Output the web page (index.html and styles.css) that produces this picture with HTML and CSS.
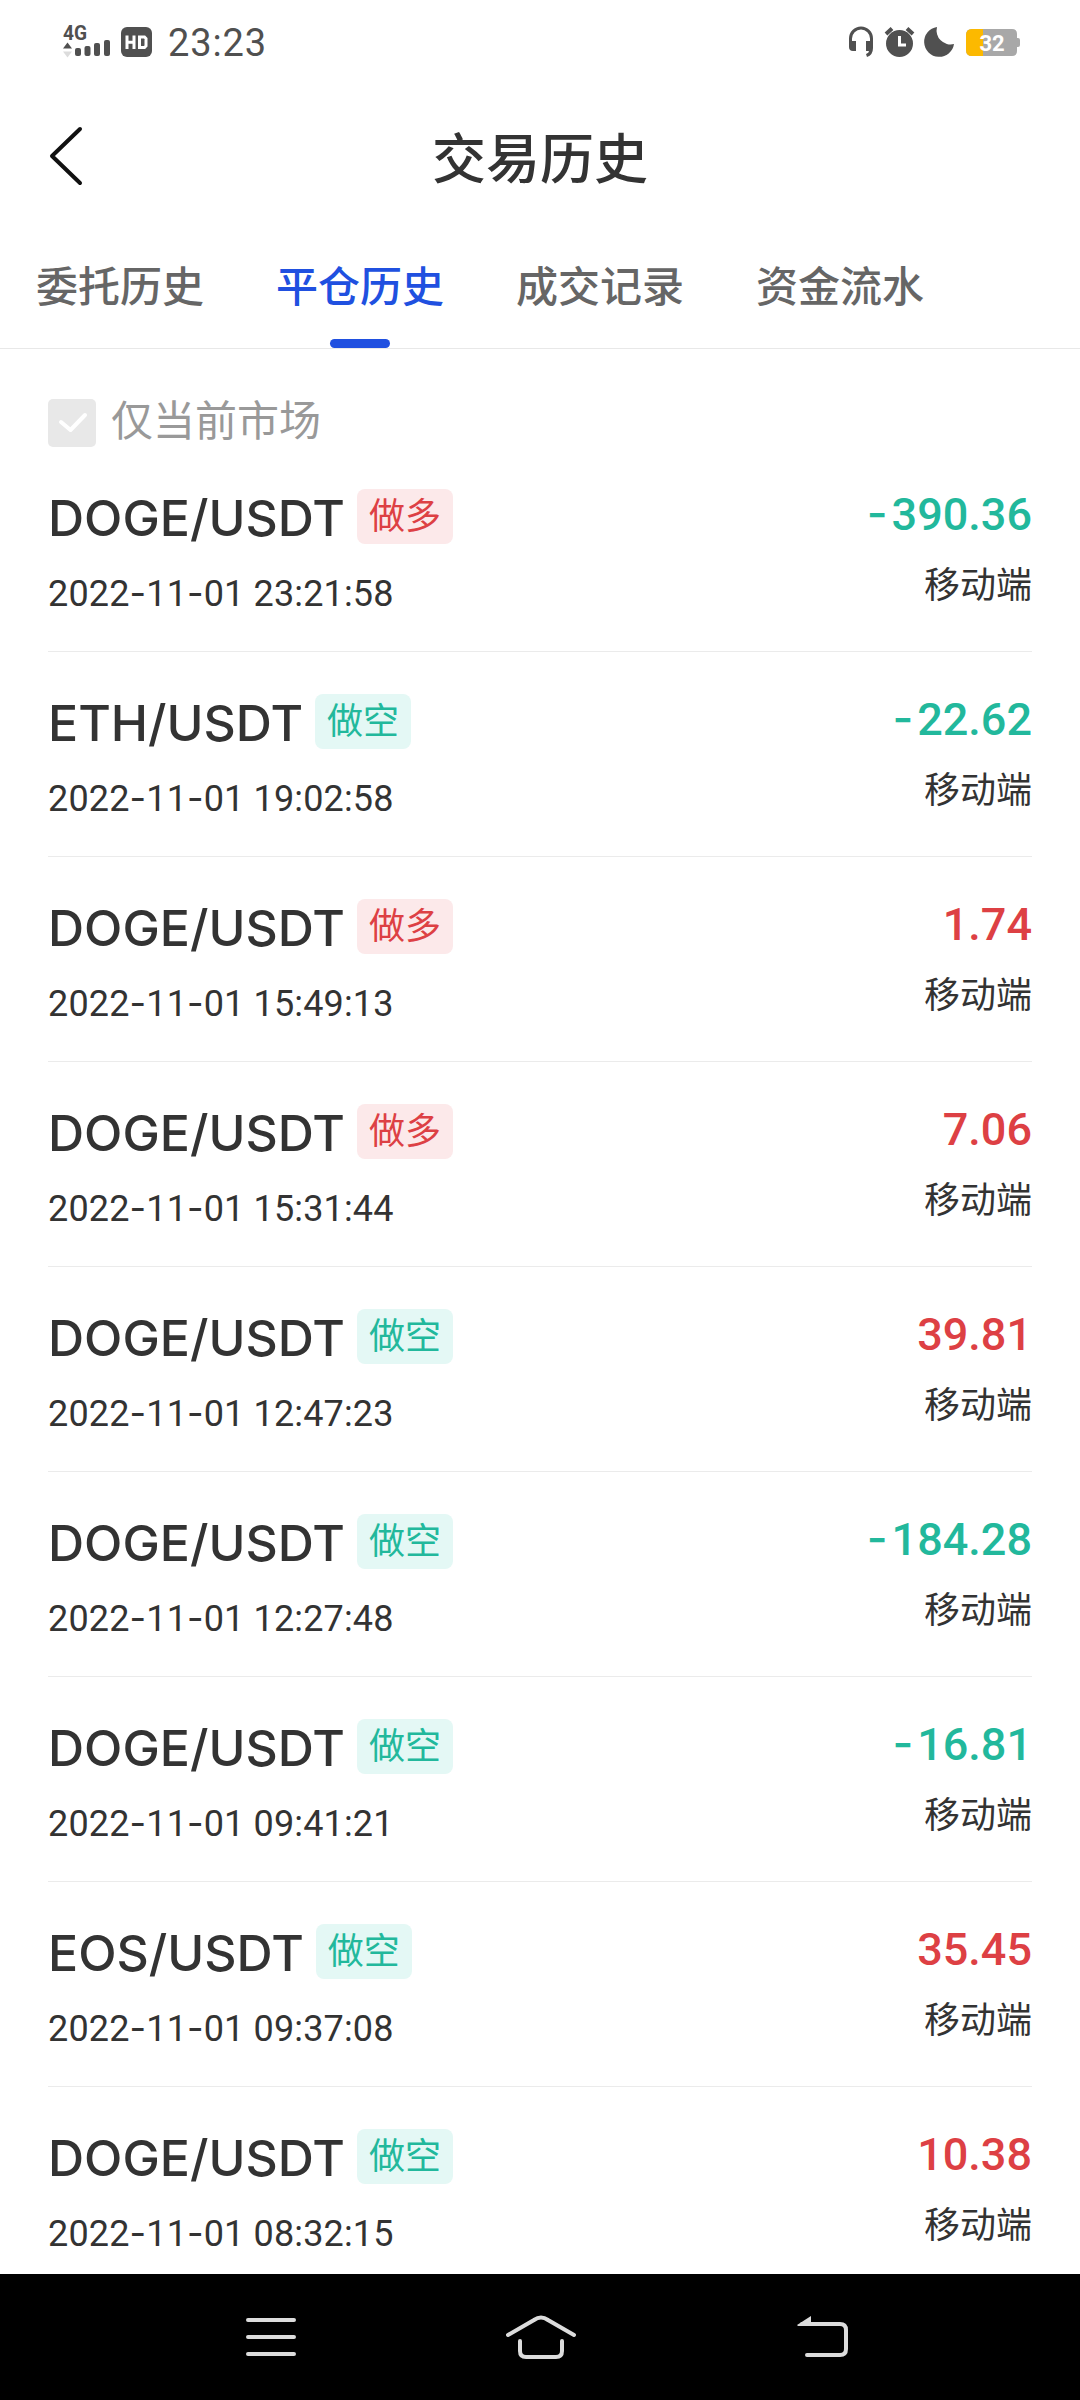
FILE: index.html
```html
<!DOCTYPE html>
<html lang="zh-CN">
<head>
<meta charset="utf-8">
<title>交易历史</title>
<link rel="stylesheet" href="styles.css">
</head>
<body>
<div class="screen">
  <header class="status">
    <svg class="signal" width="48" height="36" viewBox="0 0 48 36">
      <text class="net" x="0" y="15" textLength="24" lengthAdjust="spacingAndGlyphs">4G</text>
      <path fill="#505050" d="M4.500 17.500L9 23.500H0z"/>
      <path fill="#dcdcdc" d="M4.500 32.500L9 26.500H0z"/>
      <g fill="#505050"><rect x="12" y="23" width="6" height="8" rx="2"/><rect x="21.500" y="21" width="6" height="10" rx="2"/><rect x="31" y="18" width="6" height="13" rx="2"/><rect x="41" y="15" width="6" height="16" rx="2"/></g>
    </svg>
    <svg class="hd" width="31" height="30" viewBox="0 0 31 30">
      <rect width="31" height="30" rx="6" fill="#505050"/>
      <path d="M6 8.500V22M13 8.500V22M6 15.200H13M18.500 10H23.500L25 11.500V19L23.500 20.500H18.500z" fill="none" stroke="#fff" stroke-width="3"/>
    </svg>
    <span class="clock">23:23</span>
    <svg class="sys" width="176" height="36" viewBox="0 0 176 36">
      <path d="M3.500 18V13.500a10.500 10.500 0 0 1 21 0V18" fill="none" stroke="#505050" stroke-width="3"/>
      <path d="M2 16H9V26H6Q2 26 2 22zM19 16H26V23Q26 30 20 32L19 29Q22 28 22 26H19z" fill="#505050"/>
      <circle cx="52.500" cy="18.500" r="13.500" fill="#505050"/>
      <path d="M39 9L45 3.500M60 3.500L66 9" stroke="#505050" stroke-width="4"/>
      <path d="M52.500 11V20H59" fill="none" stroke="#fff" stroke-width="3"/>
      <path d="M90 2A15 15 0 1 0 107 19A14 14 0 0 1 90 2z" fill="#505050"/>
      <path d="M125 4H165Q170 4 170 9V13H171Q173 13 173 15V20Q173 22 171 22H170V26Q170 31 165 31H125Q119 31 119 25V10Q119 4 125 4z" fill="#a8a8a8"/>
      <path d="M125 4H136V31H125Q119 31 119 25V10Q119 4 125 4z" fill="#fcb900"/>
      <text class="level" x="132.500" y="26" textLength="25">32</text>
    </svg>
  </header>
  <div class="titlebar">
    <svg class="back" width="40" height="64" viewBox="0 0 40 64"><path d="M34 5L6 32L34 59" fill="none" stroke="#111" stroke-width="4" stroke-linecap="round" stroke-linejoin="round"/></svg>
    <h1>交易历史</h1>
  </div>
  <nav class="tabs">
    <span class="tab">委托历史</span><span class="tab active">平仓历史</span><span class="tab">成交记录</span><span class="tab">资金流水</span>
  </nav>
  <label class="filter">
    <svg width="48" height="48" viewBox="0 0 48 48"><rect width="48" height="48" rx="5" fill="#e8e8e8"/><path d="M13 23L22.500 31L37 16" fill="none" stroke="#fff" stroke-width="4" stroke-linecap="round" stroke-linejoin="round"/></svg>
    <span>仅当前市场</span>
  </label>
  <main class="list">
    <div class="row"><div class="left"><div class="pair"><b>DOGE/USDT</b><i class="tag long">做多</i></div><div class="time">2022<s>-</s>11<s>-</s>01 23:21:58</div></div><div class="right"><div class="amount down"><s>-</s>390.36</div><div class="source">移动端</div></div></div>
    <div class="row"><div class="left"><div class="pair"><b>ETH/USDT</b><i class="tag short">做空</i></div><div class="time">2022<s>-</s>11<s>-</s>01 19:02:58</div></div><div class="right"><div class="amount down"><s>-</s>22.62</div><div class="source">移动端</div></div></div>
    <div class="row"><div class="left"><div class="pair"><b>DOGE/USDT</b><i class="tag long">做多</i></div><div class="time">2022<s>-</s>11<s>-</s>01 15:49:13</div></div><div class="right"><div class="amount up">1.74</div><div class="source">移动端</div></div></div>
    <div class="row"><div class="left"><div class="pair"><b>DOGE/USDT</b><i class="tag long">做多</i></div><div class="time">2022<s>-</s>11<s>-</s>01 15:31:44</div></div><div class="right"><div class="amount up">7.06</div><div class="source">移动端</div></div></div>
    <div class="row"><div class="left"><div class="pair"><b>DOGE/USDT</b><i class="tag short">做空</i></div><div class="time">2022<s>-</s>11<s>-</s>01 12:47:23</div></div><div class="right"><div class="amount up">39.81</div><div class="source">移动端</div></div></div>
    <div class="row"><div class="left"><div class="pair"><b>DOGE/USDT</b><i class="tag short">做空</i></div><div class="time">2022<s>-</s>11<s>-</s>01 12:27:48</div></div><div class="right"><div class="amount down"><s>-</s>184.28</div><div class="source">移动端</div></div></div>
    <div class="row"><div class="left"><div class="pair"><b>DOGE/USDT</b><i class="tag short">做空</i></div><div class="time">2022<s>-</s>11<s>-</s>01 09:41:21</div></div><div class="right"><div class="amount down"><s>-</s>16.81</div><div class="source">移动端</div></div></div>
    <div class="row"><div class="left"><div class="pair"><b>EOS/USDT</b><i class="tag short">做空</i></div><div class="time">2022<s>-</s>11<s>-</s>01 09:37:08</div></div><div class="right"><div class="amount up">35.45</div><div class="source">移动端</div></div></div>
    <div class="row"><div class="left"><div class="pair"><b>DOGE/USDT</b><i class="tag short">做空</i></div><div class="time">2022<s>-</s>11<s>-</s>01 08:32:15</div></div><div class="right"><div class="amount up">10.38</div><div class="source">移动端</div></div></div>
  </main>
  <footer class="navbar">
    <svg class="menu" width="52" height="44" viewBox="0 0 52 44"><path d="M3 5H49M3 22H49M3 39H49" stroke="#dcdcdc" stroke-width="4" stroke-linecap="round"/></svg>
    <svg class="home" width="72" height="48" viewBox="0 0 72 48"><path d="M3 22L29 7Q36 2 43 7L69 22M15 28V38Q15 44 21 44H51Q57 44 57 38V28" fill="none" stroke="#dcdcdc" stroke-width="4" stroke-linecap="round"/></svg>
    <svg class="return" width="54" height="46" viewBox="0 0 54 46"><path d="M6 10H44Q50 10 50 16V35Q50 41 44 41H11" fill="none" stroke="#dcdcdc" stroke-width="4" stroke-linecap="round"/><path d="M1 11L15 2V12H2z" fill="#dcdcdc"/></svg>
  </footer>
</div>
</body>
</html>
```

FILE: styles.css
```css
* { box-sizing: border-box; }
body { margin: 0; background: #fff; color: #333; font-family: Roboto, "Noto Sans CJK SC", sans-serif; }
.screen { width: 1080px; height: 2400px; display: flex; flex-direction: column; overflow: hidden; }
.status { height: 84px; flex: none; display: flex; align-items: flex-start; padding: 25px 57px 0 63px; color: #505050; }
.signal { overflow: visible; }
.net { font: 700 20px Roboto, sans-serif; fill: #505050; }
.level { font: 700 22px Roboto, sans-serif; fill: #fff; }
.hd { margin: 2px 0 0 10px; }
.clock { margin-left: 16px; font-size: 38px; line-height: 36px; letter-spacing: 0.9px; }
.sys { margin-left: auto; }
.titlebar { height: 150px; flex: none; display: grid; grid-template-columns: 96px 1fr 96px; align-items: center; }
.back { margin: 0 0 6px 46px; }
h1 { margin: 3px 0 0; font-size: 54px; line-height: 80px; font-weight: 500; text-align: center; }
.tabs { height: 115px; flex: none; display: grid; grid-template-columns: repeat(4, 240px); border-bottom: 1px solid #e8e8e8; }
.tab { display: flex; flex-direction: column; align-items: center; justify-content: space-between; padding-top: 23px; font-size: 42px; line-height: 62px; font-weight: 500; color: #666; }
.active { color: #2050e0; }
.active::after { content: ""; width: 60px; height: 9px; border-radius: 4.5px; background: #2050e0; }
.filter { height: 98px; flex: none; display: flex; align-items: flex-end; gap: 15px; padding-left: 48px; font-size: 42px; line-height: 51px; color: #999; }
.list { height: 1827px; flex: none; padding: 0 48px; overflow: hidden; }
.row { height: 205px; display: flex; justify-content: space-between; border-bottom: 1px solid #ebebeb; }
.pair { display: flex; margin-top: 42px; height: 56px; gap: 12px; }
.pair b { font-family: Inter, sans-serif; font-size: 50px; line-height: 59px; font-weight: 500; }
.tag { height: 55px; padding: 0 12px; border-radius: 8px; font-size: 36px; line-height: 56px; font-style: normal; }
.long { color: #dd4044; background: #fce9ea; }
.short { color: #22b89c; background: #e4f8f5; }
.time { margin-top: 28px; height: 42px; font-size: 36px; line-height: 42px; letter-spacing: 0.15px; }
s { font-family: Inter, sans-serif; line-height: 0; text-decoration: none; }
.right { text-align: right; }
.amount { margin-top: 42px; height: 52px; font-size: 45px; line-height: 52px; font-weight: 500; }
.amount s { letter-spacing: 4px; vertical-align: 1px; }
.up { color: #dd4044; }
.down { color: #22b89c; }
.source { margin-top: 19px; font-size: 36px; line-height: 52px; }
.navbar { height: 126px; flex: none; display: grid; grid-template-columns: repeat(3, 276px); justify-content: center; justify-items: center; align-items: center; background: #000; }
.menu, .return { margin-left: 14px; }
.home { margin-left: 2px; }
```
